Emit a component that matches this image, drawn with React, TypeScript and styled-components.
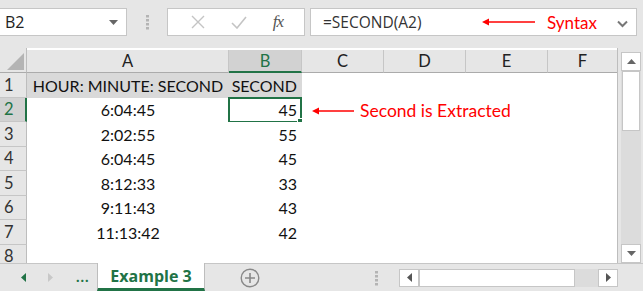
import React from 'react';
import styled, { createGlobalStyle } from 'styled-components';

const GlobalStyle = createGlobalStyle`
  html, body {
    margin: 0;
    padding: 0;
    background: #e6e6e6;
    overflow: hidden;
  }
`;

const GREEN = '#217346';
const RED = '#ff0000';
const CELL_FONT = `'Lato', 'Liberation Sans', sans-serif`;
const UI_FONT = `'Open Sans', 'Noto Sans', sans-serif`;

const columns = [
  { name: 'A', width: 202 },
  { name: 'B', width: 73 },
  { name: 'C', width: 82 },
  { name: 'D', width: 82 },
  { name: 'E', width: 82 },
  { name: 'F', width: 70 },
];

const rows: [string, string][] = [
  ['HOUR: MINUTE: SECOND', 'SECOND'],
  ['6:04:45', '45'],
  ['2:02:55', '55'],
  ['6:04:45', '45'],
  ['8:12:33', '33'],
  ['9:11:43', '43'],
  ['11:13:42', '42'],
  ['', ''],
];

const Window = styled.div`
  width: 643px;
  height: 291px;
  display: flex;
  flex-direction: column;
  background: #e6e6e6;
  position: relative;
  overflow: hidden;
`;

/* ---------- formula bar ---------- */

const FormulaBar = styled.div`
  display: flex;
  align-items: center;
  height: 28px;
  margin-top: 8px;
  padding-right: 6px;
`;

const Box = styled.div<{ $w: number }>`
  width: ${(p) => p.$w}px;
  height: 28px;
  box-sizing: border-box;
  background: #fff;
  border: 1px solid #c6c6c6;
  display: flex;
  align-items: center;
`;

const NameBox = styled(Box)`
  padding: 0 8px 0 5px;
  justify-content: space-between;
  font-family: ${UI_FONT};
  font-size: 16px;
  color: #222;
  border-left: none;
`;

const Grip = styled.div`
  width: 40px;
  display: flex;
  justify-content: center;
  svg { display: block; }
`;

const FxBox = styled(Box)`
  justify-content: space-around;
  padding: 0 8px 0 10px;
`;

const FxLabel = styled.span`
  font-family: 'Liberation Serif', serif;
  font-style: italic;
  font-size: 17px;
  color: #555;
  letter-spacing: -1px;
`;

const FormulaInput = styled(Box)`
  margin-left: 5px;
  flex: 1;
  padding: 0 8px 0 12px;
  font-family: ${UI_FONT};
  font-size: 15.5px;
  color: #333;
`;

const FormulaText = styled.span`
  flex: 1;
`;

const Note = styled.span`
  display: flex;
  align-items: center;
  gap: 12px;
  font-family: ${CELL_FONT};
  font-size: 17px;
  color: ${RED};
`;

/* ---------- sheet ---------- */

const Main = styled.div`
  display: flex;
  margin-top: 12px;
  height: 215px;
`;

const Sheet = styled.div`
  width: 618px;
  display: grid;
  grid-template-columns: 27px ${columns.map((c) => `${c.width}px`).join(' ')};
  grid-template-rows: 25px repeat(8, 24.5px);
  overflow: hidden;
  background: #fff;
  border-right: 1px solid #bdbdbd;
  box-sizing: border-box;
  position: relative;
`;

const Corner = styled.div`
  background: #e6e6e6;
  border-right: 1px solid #bdbdbd;
  border-bottom: 1px solid #ababab;
  display: flex;
  align-items: flex-end;
  justify-content: flex-end;
  padding: 0 2px 2px 0;
  svg { display: block; }
`;

const ColHead = styled.div<{ $active?: boolean }>`
  background: ${(p) => (p.$active ? '#d2d2d2' : '#e6e6e6')};
  border-right: 1px solid #c6c6c6;
  border-bottom: ${(p) => (p.$active ? `2px solid ${GREEN}` : '1px solid #ababab')};
  display: flex;
  align-items: center;
  justify-content: center;
  font-family: ${CELL_FONT};
  font-size: 16.5px;
  color: ${(p) => (p.$active ? GREEN : '#222')};
  margin-top: 2px;
`;

const RowHead = styled.div<{ $active?: boolean }>`
  background: ${(p) => (p.$active ? '#d2d2d2' : '#e6e6e6')};
  border-right: ${(p) => (p.$active ? `2px solid ${GREEN}` : '1px solid #bdbdbd')};
  border-bottom: 1px solid #c6c6c6;
  display: flex;
  align-items: center;
  padding-left: 4px;
  font-family: ${CELL_FONT};
  font-size: 16.5px;
  color: ${(p) => (p.$active ? GREEN : '#333')};
`;

const Cell = styled.div<{ $align: 'center' | 'right'; $shade?: boolean }>`
  background: ${(p) => (p.$shade ? '#d9d9d9' : '#fff')};
  display: flex;
  align-items: center;
  justify-content: ${(p) => (p.$align === 'center' ? 'center' : 'flex-end')};
  padding-right: ${(p) => (p.$align === 'right' ? '5px' : '0')};
  font-family: ${CELL_FONT};
  font-size: 16px;
  color: #111;
  white-space: nowrap;
  position: relative;
`;

const Selected = styled.div`
  position: absolute;
  inset: -1px 0 -1px -1px;
  border: 2px solid ${GREEN};
  pointer-events: none;

  &::after {
    content: '';
    position: absolute;
    right: -4px;
    bottom: -4px;
    width: 5px;
    height: 5px;
    background: ${GREEN};
    border: 1px solid #fff;
  }
`;

const Gap = styled.div`
  width: 3px;
`;

const VScroll = styled.div`
  width: 20px;
  display: flex;
  flex-direction: column;
  background: #dcdcdc;
  margin-top: 4px;
`;

const ScrollBtn = styled.div`
  height: 19px;
  background: #fff;
  border: 1px solid #c6c6c6;
  box-sizing: border-box;
  display: flex;
  align-items: center;
  justify-content: center;
  svg { display: block; }
`;

const VThumb = styled.div`
  height: 60px;
  margin: 0 1px;
  background: #fff;
  border: 1px solid #c6c6c6;
  box-sizing: border-box;
`;

const Spacer = styled.div`
  flex: 1;
`;

/* ---------- tab bar ---------- */

const TabBar = styled.div`
  display: flex;
  align-items: stretch;
  height: 28px;
  border-top: 1px solid #c6c6c6;
  box-sizing: border-box;
`;

const NavArrows = styled.div`
  width: 97px;
  display: flex;
  align-items: center;
  padding-left: 20px;
  box-sizing: border-box;
  gap: 20px;
  svg { display: block; }
`;

const Ellipsis = styled.span`
  font-family: ${CELL_FONT};
  font-weight: 700;
  font-size: 15px;
  color: ${GREEN};
  letter-spacing: 1px;
  margin-left: 2px;
  margin-top: -4px;
`;

const Tab = styled.div`
  width: 108px;
  margin-top: -1px;
  background: #fff;
  border-left: 1px solid #bdbdbd;
  border-right: 1px solid #bdbdbd;
  border-bottom: 3px solid ${GREEN};
  box-sizing: border-box;
  display: flex;
  align-items: center;
  justify-content: center;
  font-family: 'Open Sans', sans-serif;
  font-weight: 700;
  font-size: 16px;
  color: ${GREEN};
`;

const AddSheet = styled.div`
  width: 90px;
  display: flex;
  align-items: center;
  justify-content: center;
  svg { display: block; }
`;

const HScrollArea = styled.div`
  flex: 1;
  display: flex;
  align-items: center;
  justify-content: flex-end;
  padding-right: 25px;
`;

const HGrip = styled.div`
  margin-right: 21px;
  svg { display: block; }
`;

const HScroll = styled.div`
  width: 219px;
  height: 18px;
  display: flex;
  background: #dcdcdc;
`;

const HBtn = styled.div`
  width: 20px;
  background: #fff;
  border: 1px solid #c6c6c6;
  box-sizing: border-box;
  display: flex;
  align-items: center;
  justify-content: center;
  svg { display: block; }
`;

const HThumb = styled.div`
  width: 156px;
  background: #fff;
  border: 1px solid #c6c6c6;
  box-sizing: border-box;
`;

const Callout = styled.div`
  position: absolute;
  left: 312px;
  top: 100px;
  display: flex;
  align-items: center;
  gap: 6px;
  font-family: ${CELL_FONT};
  font-size: 17.5px;
  color: ${RED};
  svg { display: block; }
`;

const LeftArrow = ({ w }: { w: number }) => (
  <svg width={w} height="8" viewBox={`0 0 ${w} 8`}>
    <path d={`M0 4 L7 0.5 L7 7.5 Z`} fill={RED} />
    <line x1="6" y1="4" x2={w} y2="4" stroke={RED} strokeWidth="1.6" />
  </svg>
);

const Tri = ({ dir, color }: { dir: 'up' | 'down' | 'left' | 'right'; color: string }) => {
  const d = {
    up: 'M0 6 L4.5 1 L9 6 Z',
    down: 'M0 1 L4.5 6 L9 1 Z',
    left: 'M6 0 L1 4.5 L6 9 Z',
    right: 'M1 0 L6 4.5 L1 9 Z',
  }[dir];
  const vb = dir === 'up' || dir === 'down' ? '0 0 9 7' : '0 0 7 9';
  const [w, h] = dir === 'up' || dir === 'down' ? [9, 7] : [7, 9];
  return (
    <svg width={w} height={h} viewBox={vb}>
      <path d={d} fill={color} />
    </svg>
  );
};

const DotsV = () => (
  <svg width="3" height="16" viewBox="0 0 3 16">
    {[1, 5, 9, 13].map((y) => (
      <rect key={y} x="0" y={y} width="3" height="2.5" fill="#b4b4b4" />
    ))}
  </svg>
);

export default function App() {
  return (
    <Window>
      <GlobalStyle />
      <FormulaBar>
        <NameBox $w={127}>
          <span>B2</span>
          <Tri dir="down" color="#666" />
        </NameBox>
        <Grip>
          <DotsV />
        </Grip>
        <FxBox $w={138}>
          <svg width="14" height="14" viewBox="0 0 14 14">
            <path d="M1 1 L13 13 M13 1 L1 13" stroke="#c4c4c4" strokeWidth="1.4" />
          </svg>
          <svg width="16" height="13" viewBox="0 0 16 13">
            <path d="M1 7 L6 12 L15 1" stroke="#c4c4c4" strokeWidth="1.6" fill="none" />
          </svg>
          <FxLabel>fx</FxLabel>
        </FxBox>
        <FormulaInput $w={327}>
          <FormulaText>=SECOND(A2)</FormulaText>
          <Note>
            <LeftArrow w={53} />
            Syntax
          </Note>
          <span style={{ marginLeft: 20 }}>
            <svg width="11" height="8" viewBox="0 0 11 8">
              <path d="M1 1.5 L5.5 6 L10 1.5" stroke="#777" strokeWidth="2" fill="none" />
            </svg>
          </span>
        </FormulaInput>
      </FormulaBar>

      <Main>
        <Sheet>
          <Corner>
            <svg width="17" height="17" viewBox="0 0 17 17">
              <path d="M17 0 L17 17 L0 17 Z" fill="#b4b4b4" />
            </svg>
          </Corner>
          {columns.map((c) => (
            <ColHead key={c.name} $active={c.name === 'B'}>
              {c.name}
            </ColHead>
          ))}
          {rows.map((r, i) => (
            <React.Fragment key={i}>
              <RowHead $active={i === 1}>{i + 1}</RowHead>
              <Cell $align="center" $shade={i === 0}>
                {r[0]}
              </Cell>
              <Cell $align="right" $shade={i === 0}>
                {r[1]}
                {i === 1 && <Selected />}
              </Cell>
              <Cell $align="center" />
              <Cell $align="center" />
              <Cell $align="center" />
              <Cell $align="center" />
            </React.Fragment>
          ))}
        </Sheet>
        <Gap />
        <VScroll>
          <ScrollBtn>
            <Tri dir="up" color="#666" />
          </ScrollBtn>
          <VThumb />
          <Spacer />
          <ScrollBtn>
            <Tri dir="down" color="#666" />
          </ScrollBtn>
        </VScroll>
      </Main>

      <TabBar>
        <NavArrows>
          <Tri dir="left" color={GREEN} />
          <Tri dir="right" color="#c8c8c8" />
          <Ellipsis>...</Ellipsis>
        </NavArrows>
        <Tab>Example 3</Tab>
        <AddSheet>
          <svg width="20" height="20" viewBox="0 0 20 20">
            <circle cx="10" cy="10" r="8.8" stroke="#888" strokeWidth="1.4" fill="none" />
            <path d="M10 5 V15 M5 10 H15" stroke="#888" strokeWidth="1.6" />
          </svg>
        </AddSheet>
        <HScrollArea>
          <HGrip>
            <DotsV />
          </HGrip>
          <HScroll>
            <HBtn>
              <Tri dir="left" color="#555" />
            </HBtn>
            <HThumb />
            <Spacer />
            <HBtn>
              <Tri dir="right" color="#555" />
            </HBtn>
          </HScroll>
        </HScrollArea>
      </TabBar>

      <Callout>
        <LeftArrow w={42} />
        Second is Extracted
      </Callout>
    </Window>
  );
}
